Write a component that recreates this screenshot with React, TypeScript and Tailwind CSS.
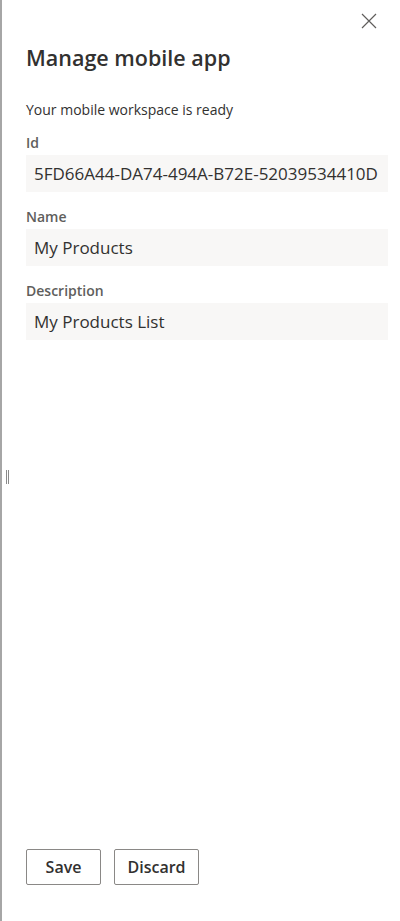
const fields = [
  { label: "Id", value: "5FD66A44-DA74-494A-B72E-52039534410D" },
  { label: "Name", value: "My Products" },
  { label: "Description", value: "My Products List" },
]

export default function App() {
  return (
    <div
      className="relative flex h-[921px] w-[400px] flex-col border-l-2 border-[#a6a6a6] bg-white text-[#323130]"
      style={{ fontFamily: '"Open Sans", "Noto Sans", sans-serif' }}
    >
      <button className="absolute right-[22px] top-[12px] grid size-[18px] place-content-center text-[#605e5c]">
        <svg width="16" height="16" viewBox="0 0 16 16" fill="none" stroke="currentColor" strokeWidth="1.2">
          <path d="M1 1 L15 15 M15 1 L1 15" />
        </svg>
      </button>

      <div className="absolute left-[4px] top-[470px] flex h-[14px] gap-[1px]">
        <div className="w-[1px] bg-[#8a8a8a]" />
        <div className="w-[1px] bg-[#8a8a8a]" />
      </div>

      <div className="flex flex-1 flex-col pl-[24px] pr-[12px]">
        <h1 className="mt-[44px] text-[21.5px] font-semibold leading-[28px]">Manage mobile app</h1>
        <p className="mt-[29px] text-[14px] leading-[18px]">Your mobile workspace is ready</p>

        <div className="mt-[14px] flex flex-col gap-[15px]">
          {fields.map((f) => (
            <div key={f.label} className="flex flex-col">
              <label className="text-[14px] font-semibold leading-[20px] text-[#605e5c]">{f.label}</label>
              <div className="mt-[2px] flex h-[37px] items-center bg-[#f8f7f6] px-[8px] text-[17px]">
                {f.value}
              </div>
            </div>
          ))}
        </div>

        <div className="mt-auto mb-[36px] flex gap-[13px]">
          <button className="h-[36px] w-[75px] rounded-[2px] border border-[#8a8886] text-[16px] font-semibold">
            Save
          </button>
          <button className="h-[36px] w-[85px] rounded-[2px] border border-[#8a8886] text-[16px] font-semibold">
            Discard
          </button>
        </div>
      </div>
    </div>
  )
}
